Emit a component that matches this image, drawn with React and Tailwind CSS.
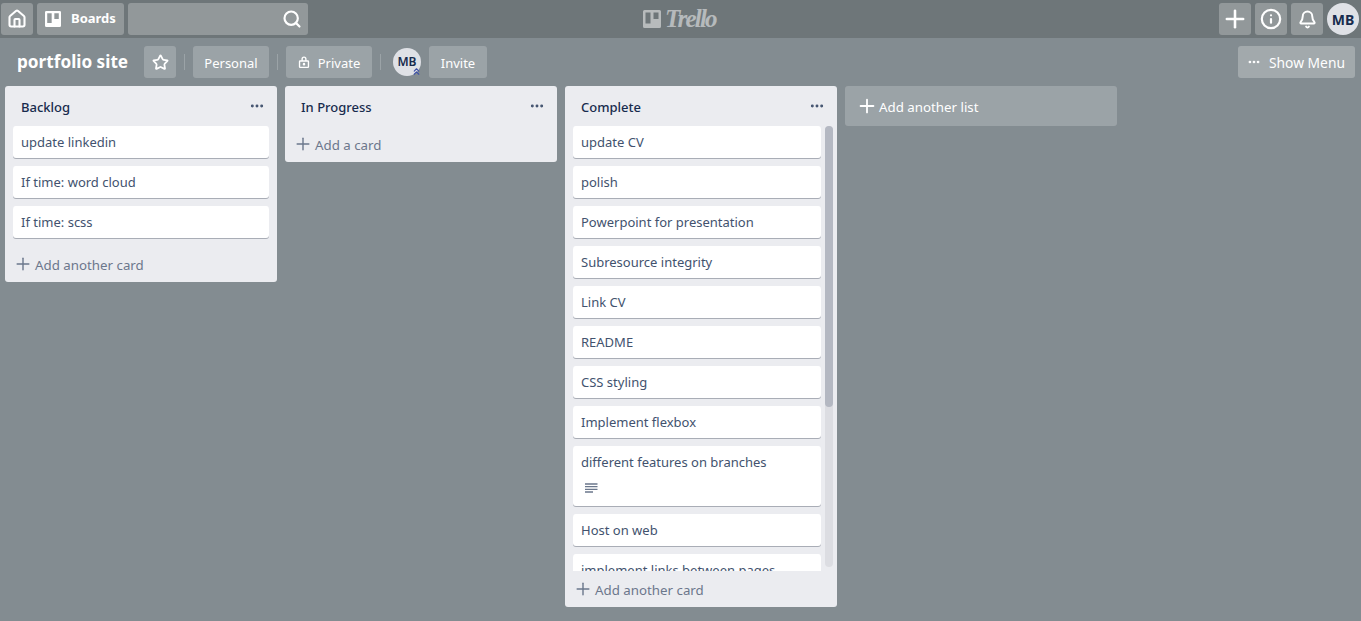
import React from "react";
import { Plus, Info, Bell, Search, House, Star, Ellipsis, ChevronsUp } from "lucide-react";

function Logo({ className }) {
  return (
    <svg viewBox="0 0 18 18" className={className} fill="currentColor">
      <path fillRule="evenodd" d="M1.5 0h15A1.5 1.5 0 0 1 18 1.5v15a1.5 1.5 0 0 1-1.5 1.5h-15A1.5 1.5 0 0 1 0 16.500v-15A1.500 1.500 0 0 1 1.500 0zM2.500 2.500v11h5v-11zM10.500 2.500v6.500h5v-6.500z" />
    </svg>
  );
}

function LockIcon({ className }) {
  return (
    <svg viewBox="0 0 14 16" className={className} fill="currentColor">
      <path fillRule="evenodd" d="M4 6V4.500a3 3 0 0 1 6 0V6h1.500A1.500 1.500 0 0 1 13 7.500v6a1.500 1.500 0 0 1-1.500 1.500h-9A1.500 1.500 0 0 1 1 13.500v-6A1.500 1.500 0 0 1 2.500 6zM5.600 6h2.800V4.500a1.400 1.400 0 0 0-2.800 0zM2.600 7.600v5.800h8.800V7.600zM7 9a1.500 1.500 0 1 1 0 3 1.500 1.500 0 0 1 0-3z" />
    </svg>
  );
}

function DescIcon({ className }) {
  return (
    <svg viewBox="0 0 13 10" className={className} fill="none" stroke="currentColor" strokeWidth="1.300">
      <path d="M0 1h12.500M0 3.700h12.500M0 6.400h12.500M0 9h8" />
    </svg>
  );
}

const cardCls = "shrink-0 bg-white rounded-[3px] shadow-[0_1px_0_#a9adb6] px-2 pt-[6px] text-[13px] leading-[20px] text-[#42526e]";

function Card({ children, desc }) {
  return (
    <div className={`${cardCls} w-[248px] ${desc ? "h-[60px]" : "h-[32px]"}`}>
      {children}
      {desc && <DescIcon className="ml-1 mt-[11px] w-[13px] h-[10px] text-[#6b778c]" />}
    </div>
  );
}

function ListHead({ title }) {
  return (
    <div className="h-[40px] flex items-center justify-between pl-4 pr-[12px]">
      <span className="text-[13px] leading-[20px] pt-px font-medium text-[#172b4d]">{title}</span>
      <Ellipsis className="w-4 h-4 text-[#42526e]" strokeWidth={2.4} />
    </div>
  );
}

function AddCard({ label }) {
  return (
    <div className="h-[36px] flex items-center pl-[8px] gap-[2px] text-[13.300px] text-[#6b778c]">
      <Plus className="w-5 h-5" strokeWidth={1.700} />
      <span className="leading-[20px] pt-px">{label}</span>
    </div>
  );
}

const hb = "h-[32px] rounded-[3px] bg-white/25 flex items-center justify-center text-white";
const bbBase = "h-[32px] rounded-[3px] flex items-center text-white leading-[20px]";
const bb = `${bbBase} bg-white/20 text-[13px]`;
const Div = () => <div className="w-px h-4 bg-white/20" />;
const T = ({ children }) => <span className="pt-px">{children}</span>;

export default function App() {
  const complete = ["update CV", "polish", "Powerpoint for presentation", "Subresource integrity", "Link CV", "README", "CSS styling", "Implement flexbox"];
  return (
    <div className="w-[1361px] h-[621px] overflow-hidden bg-[#838c91] flex flex-col font-['Noto_Sans',sans-serif]">
      <header className="h-[38px] shrink-0 bg-[#6e7679] flex items-center pl-px pr-[2px] gap-1 relative">
        <div className={`${hb} w-[32px]`}><House className="w-[20px] h-[20px]" strokeWidth={2.500} /></div>
        <div className={`${hb} w-[87px] gap-[10px] justify-start pl-[8px]`}>
          <Logo className="w-4 h-4" />
          <span className="text-[13px] font-bold">Boards</span>
        </div>
        <div className={`${hb} w-[180px] justify-end pr-[6px]`}><Search className="w-[20px] h-[20px]" strokeWidth={2.600} /></div>
        <div className="flex-1" />
        <div className={`${hb} w-[32px]`}><Plus className="w-[28px] h-[28px]" strokeWidth={2.200} /></div>
        <div className={`${hb} w-[32px]`}><Info className="w-[22px] h-[22px]" strokeWidth={2.400} /></div>
        <div className={`${hb} w-[32px]`}><Bell className="w-[19px] h-[19px]" strokeWidth={2.500} /></div>
        <div className="w-[32px] h-[32px] rounded-full bg-[#dfe1e6] flex items-center justify-center text-[14px] font-bold text-[#172b4d]">MB</div>
        <div className="absolute left-[643px] top-[9px] flex items-center gap-[4px] text-white/50">
          <Logo className="w-[18px] h-[18px]" />
          <span className="text-[25px] leading-[20px] italic font-bold font-['Liberation_Serif',serif] tracking-[-1.800px]">Trello</span>
        </div>
      </header>

      <div className="h-[48px] shrink-0 flex items-center pl-[17px] pr-[6px]">
        <h1 className="text-[17.200px] font-bold text-white w-[127px]">portfolio site</h1>
        <div className={`${bb} w-[32px] justify-center`}><Star className="w-[17px] h-[17px]" strokeWidth={2.500} /></div>
        <div className="w-[17px] flex justify-center"><Div /></div>
        <div className={`${bb} w-[76px] justify-center`}><T>Personal</T></div>
        <div className="w-[17px] flex justify-center"><Div /></div>
        <div className={`${bb} w-[86px] justify-center gap-[8px]`}><LockIcon className="w-[12px] h-[14px]" /><T>Private</T></div>
        <div className="w-[17px] flex justify-center"><Div /></div>
        <div className="relative w-[28px] h-[28px] ml-[4px] mr-[8px] rounded-full bg-[#dfe1e6] flex items-center justify-center text-[12px] font-semibold text-[#172b4d]">
          MB
          <ChevronsUp className="absolute -right-[1px] -bottom-[1px] w-[11px] h-[11px] text-[#3b4fa8]" strokeWidth={2.400} />
        </div>
        <div className={`${bb} w-[58px] justify-center`}><T>Invite</T></div>
        <div className="flex-1" />
        <div className={`${bbBase} bg-white/25 text-[13.800px] w-[117px] pl-[9px] gap-[8px]`}><Ellipsis className="w-[14px] h-[14px]" strokeWidth={2.600} /><T>Show Menu</T></div>
      </div>

      <div className="flex items-start pl-[5px] gap-2">
        <section className="w-[272px] rounded-[3px] bg-[#ebecf0]">
          <ListHead title="Backlog" />
          <div className="flex flex-col gap-2 px-2">
            {["update linkedin", "If time: word cloud", "If time: scss"].map((t) => (
              <div key={t} className={`${cardCls} w-[256px] h-[32px]`}>{t}</div>
            ))}
          </div>
          <div className="h-[44px] pt-[8px]"><AddCard label="Add another card" /></div>
        </section>

        <section className="w-[272px] rounded-[3px] bg-[#ebecf0]">
          <ListHead title="In Progress" />
          <AddCard label="Add a card" />
        </section>

        <section className="w-[272px] h-[521px] rounded-[3px] bg-[#ebecf0] flex flex-col">
          <ListHead title="Complete" />
          <div className="flex h-[445px] pl-2 gap-1">
            <div className="w-[248px] h-[445px] overflow-hidden flex flex-col gap-2">
              {complete.map((t) => <Card key={t}>{t}</Card>)}
              <Card desc>different features on branches</Card>
              <Card>Host on web</Card>
              <Card>implement links between pages</Card>
            </div>
            <div className="w-2 h-[441px] rounded-[4px] bg-[#dcdde2]">
              <div className="w-2 h-[281px] rounded-[4px] bg-[#b4b8c2]" />
            </div>
          </div>
          <AddCard label="Add another card" />
        </section>

        <section className="w-[272px] h-[40px] rounded-[3px] bg-white/20 flex items-center pl-[11px] gap-px text-white text-[13.300px] leading-[20px]">
          <Plus className="w-[22px] h-[22px]" strokeWidth={2} />
          <T>Add another list</T>
        </section>
      </div>
    </div>
  );
}
